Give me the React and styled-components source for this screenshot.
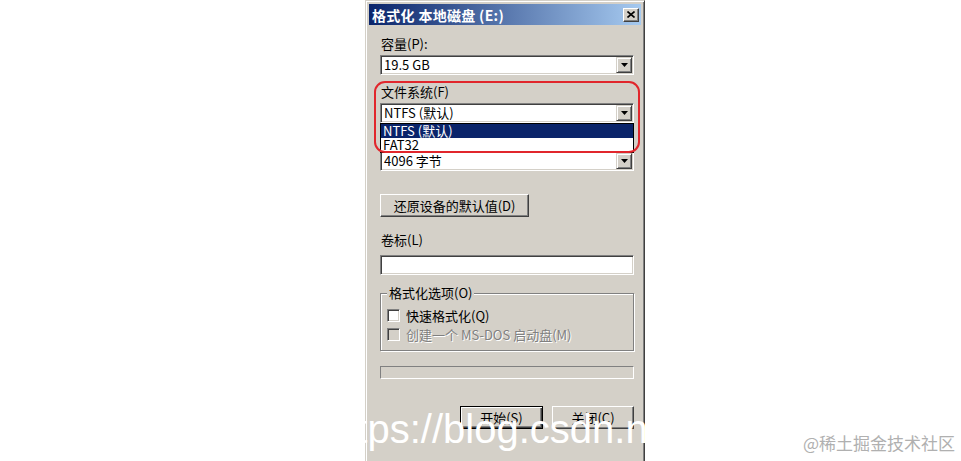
import React from "react";
import styled, { createGlobalStyle } from "styled-components";

const GlobalStyle = createGlobalStyle`
  html, body {
    margin: 0;
    padding: 0;
    background: #ffffff;
  }
  body {
    font-family: "Noto Sans CJK SC", "Liberation Sans", sans-serif;
  }
`;

const Stage = styled.div`
  position: relative;
  width: 961px;
  height: 461px;
  overflow: hidden;
  background: #ffffff;
`;

const Dialog = styled.div`
  box-sizing: border-box;
  width: 280px;
  height: 490px;
  margin-left: 365px;
  padding: 3px;
  background: #d4d0c8;
  border: 1px solid;
  border-color: #d4d0c8 #404040 #404040 #d4d0c8;
  box-shadow: inset 1px 1px 0 #ffffff, inset -1px -1px 0 #808080;
  font: 13px/16px "Noto Sans CJK SC", sans-serif;
  color: #000;
`;

const TitleBar = styled.div`
  display: flex;
  align-items: center;
  height: 21px;
  padding: 0 2px 0 3px;
  background: linear-gradient(to right, #0a246a, #a6caf0);
  color: #ffffff;
  font-weight: 700;
  font-size: 14px;
  letter-spacing: 0.3px;
`;

const CloseButton = styled.div`
  box-sizing: border-box;
  display: flex;
  align-items: center;
  justify-content: center;
  width: 16px;
  height: 14px;
  margin-left: auto;
  background: #d4d0c8;
  border: 1px solid;
  border-color: #ffffff #404040 #404040 #ffffff;
  box-shadow: inset -1px -1px 0 #808080;
`;

const Body = styled.div`
  display: flex;
  flex-direction: column;
  padding: 0 7px 0 11px;
`;

const Label = styled.div`
  margin-top: ${(p) => p.$top || 0}px;
  height: 16px;
  padding-left: 1px;
  white-space: nowrap;
`;

const Section = styled.div`
  position: relative;
  display: flex;
  flex-direction: column;
  margin-top: ${(p) => p.$top || 0}px;
`;

const Annotation = styled.div`
  position: absolute;
  top: -3px;
  left: -6px;
  right: -6px;
  height: 72px;
  box-sizing: border-box;
  border: 2px solid #e1262c;
  border-radius: 11px;
  pointer-events: none;
  z-index: 3;
`;

const ComboWrap = styled.div`
  position: relative;
  margin-top: ${(p) => p.$top || 3}px;
`;

const Sunken = styled.div`
  box-sizing: border-box;
  height: 20px;
  padding: 1px;
  background: #ffffff;
  border: 1px solid;
  border-color: #808080 #ffffff #ffffff #808080;
  box-shadow: inset 1px 1px 0 #404040, inset -1px -1px 0 #d4d0c8;
`;

const ComboBox = styled(Sunken)`
  display: flex;
  align-items: center;
`;

const ComboValue = styled.div`
  flex: 1;
  padding-left: 2px;
  white-space: nowrap;
`;

const ArrowButton = styled.div`
  box-sizing: border-box;
  display: flex;
  align-items: center;
  justify-content: center;
  width: 16px;
  height: 16px;
  background: #d4d0c8;
  border: 1px solid;
  border-color: #d4d0c8 #404040 #404040 #d4d0c8;
  box-shadow: inset 1px 1px 0 #ffffff, inset -1px -1px 0 #808080;
`;

const DropList = styled.div`
  position: absolute;
  top: 20px;
  left: 0;
  right: 0;
  box-sizing: border-box;
  border: 1px solid #000;
  background: #ffffff;
  z-index: 2;
`;

const ListItem = styled.div`
  height: 14px;
  line-height: 14px;
  padding-left: 2px;
  white-space: nowrap;
  background: ${(p) => (p.$selected ? "#0a246a" : "#ffffff")};
  color: ${(p) => (p.$selected ? "#ffffff" : "#000000")};
`;

const Button = styled.div`
  box-sizing: border-box;
  display: flex;
  align-items: center;
  justify-content: center;
  width: ${(p) => p.$width}px;
  height: 23px;
  margin-top: ${(p) => p.$top || 0}px;
  background: #d4d0c8;
  white-space: nowrap;
  border: 1px solid;
  border-color: ${(p) => (p.$default ? "#000" : "#ffffff #404040 #404040 #ffffff")};
  box-shadow: ${(p) =>
    p.$default
      ? "inset 1px 1px 0 #ffffff, inset -1px -1px 0 #404040, inset -2px -2px 0 #808080"
      : "inset -1px -1px 0 #808080"};
`;

const TextInput = styled(Sunken)`
  margin-top: 7px;
`;

const GroupBox = styled.fieldset`
  margin: 10px 0 0;
  padding: 5px 6px 6px 6px;
  border: 1px solid #808080;
  box-shadow: 1px 1px 0 #ffffff, inset 1px 1px 0 #ffffff;
  min-inline-size: 0;
`;

const Legend = styled.legend`
  padding: 0 2px;
  background: #d4d0c8;
  line-height: 16px;
`;

const CheckRow = styled.div`
  display: flex;
  align-items: center;
  height: 19px;
  white-space: nowrap;
  color: ${(p) => (p.$disabled ? "#808080" : "#000")};
  text-shadow: ${(p) => (p.$disabled ? "1px 1px 0 #ffffff" : "none")};
`;

const CheckBox = styled.span`
  box-sizing: border-box;
  width: 13px;
  height: 13px;
  margin-right: 6px;
  background: ${(p) => (p.$disabled ? "#d4d0c8" : "#ffffff")};
  border: 1px solid;
  border-color: #808080 #ffffff #ffffff #808080;
  box-shadow: inset 1px 1px 0 #404040, inset -1px -1px 0 #d4d0c8;
`;

const Progress = styled.div`
  box-sizing: border-box;
  height: 13px;
  margin-top: 15px;
  border: 1px solid;
  border-color: #808080 #ffffff #ffffff #808080;
`;

const ButtonRow = styled.div`
  display: flex;
  justify-content: flex-end;
  gap: 9px;
  margin-top: 27px;
`;

const UrlMark = styled.div`
  position: absolute;
  left: 323px;
  top: 409px;
  font: 40px/40px "Liberation Sans", Arial, sans-serif;
  color: #ffffff;
  white-space: nowrap;
  z-index: 5;
`;

const SiteMark = styled.div`
  position: absolute;
  right: 6px;
  top: 433px;
  font: 17px/20px "Noto Sans CJK SC", sans-serif;
  color: #b0b0b0;
  white-space: nowrap;
`;

const DownArrow = () => (
  <svg width="7" height="4" viewBox="0 0 7 4">
    <path d="M0 0H7L3.5 4Z" fill="#000" />
  </svg>
);

const CloseGlyph = () => (
  <svg width="8" height="7" viewBox="0 0 8 7">
    <path d="M0.5 0.5L7.5 6.5M7.5 0.5L0.5 6.5" stroke="#000" strokeWidth="1.6" />
  </svg>
);

const Combo = ({ value, top, children }) => (
  <ComboWrap $top={top}>
    <ComboBox>
      <ComboValue>{value}</ComboValue>
      <ArrowButton>
        <DownArrow />
      </ArrowButton>
    </ComboBox>
    {children}
  </ComboWrap>
);

export default function App() {
  return (
    <Stage>
      <GlobalStyle />
      <Dialog>
        <TitleBar>
          <span>格式化 本地磁盘 (E:)</span>
          <CloseButton>
            <CloseGlyph />
          </CloseButton>
        </TitleBar>
        <Body>
          <Label $top={11}>容量(P):</Label>
          <Combo value="19.5 GB" />

          <Section $top={9}>
            <Annotation />
            <Label>文件系统(F)</Label>
            <Combo value="NTFS (默认)">
              <DropList>
                <ListItem $selected>NTFS (默认)</ListItem>
                <ListItem>FAT32</ListItem>
              </DropList>
            </Combo>
            {/* the allocation-size label sits under the open list */}
            <Combo value="4096 字节" top={28} />
          </Section>

          <Button $width={149} $top={23}>还原设备的默认值(D)</Button>

          <Label $top={15}>卷标(L)</Label>
          <TextInput />

          <GroupBox>
            <Legend>格式化选项(O)</Legend>
            <CheckRow>
              <CheckBox />
              快速格式化(Q)
            </CheckRow>
            <CheckRow $disabled>
              <CheckBox $disabled />
              创建一个 MS-DOS 启动盘(M)
            </CheckRow>
          </GroupBox>

          <Progress />

          <ButtonRow>
            <Button $width={83} $default>开始(S)</Button>
            <Button $width={82}>关闭(C)</Button>
          </ButtonRow>
        </Body>
      </Dialog>
      <UrlMark>https://blog.csdn.net</UrlMark>
      <SiteMark>@稀土掘金技术社区</SiteMark>
    </Stage>
  );
}
